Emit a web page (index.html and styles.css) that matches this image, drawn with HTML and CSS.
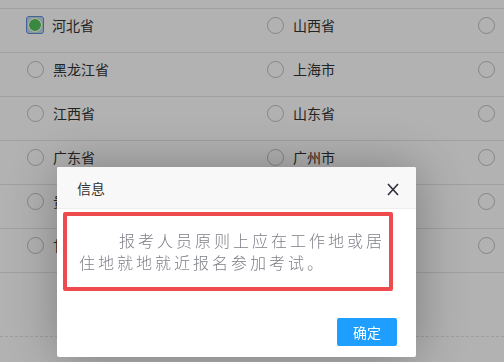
FILE: index.html
```html
<!DOCTYPE html>
<html lang="zh-CN">
  <head>
    <meta charset="UTF-8" />
    <meta name="viewport" content="width=device-width, initial-scale=1.0" />
    <title>选择报考地区</title>
    <link rel="stylesheet" href="styles.css">
  </head>
  <body>
    <div class="area-list">
      <div class="area-row">
        <label class="opt"><span class="focus-ring"><span class="radio checked"></span></span>河北省</label>
        <label class="opt"><span class="radio"></span>山西省</label>
        <label class="opt"><span class="radio"></span>内蒙古</label>
      </div>
      <div class="area-row">
        <label class="opt"><span class="radio"></span>黑龙江省</label>
        <label class="opt"><span class="radio"></span>上海市</label>
        <label class="opt"><span class="radio"></span>江苏省</label>
      </div>
      <div class="area-row">
        <label class="opt"><span class="radio"></span>江西省</label>
        <label class="opt"><span class="radio"></span>山东省</label>
        <label class="opt"><span class="radio"></span>河南省</label>
      </div>
      <div class="area-row">
        <label class="opt"><span class="radio"></span>广东省</label>
        <label class="opt"><span class="radio"></span>广州市</label>
        <label class="opt"><span class="radio"></span>深圳市</label>
      </div>
      <div class="area-row">
        <label class="opt"><span class="radio"></span>贵州省</label>
        <label class="opt"><span class="radio"></span>云南省</label>
        <label class="opt"><span class="radio"></span>西藏</label>
      </div>
      <div class="area-row">
        <label class="opt"><span class="radio"></span>甘肃省</label>
        <label class="opt"><span class="radio"></span>青海省</label>
        <label class="opt"><span class="radio"></span>宁夏</label>
      </div>
    </div>
    <div class="list-foot"></div>

    <!-- layer -->
    <div class="layer-shade"></div>
    <div class="layer">
      <div class="layer-title">
        <span>信息</span>
        <svg class="layer-close" width="12" height="13" viewBox="0 0 12 13">
          <path d="M1 1 L11 12 M11 1 L1 12" stroke="#2f2f3a" stroke-width="1.6" fill="none" />
        </svg>
      </div>
      <div class="layer-content">
        <div class="notice">
          <p>报考人员原则上应在工作地或居住地就地就近报名参加考试。</p>
        </div>
      </div>
      <div class="layer-btn">
        <a class="btn-ok">确定</a>
      </div>
    </div>
  </body>
</html>
```

FILE: styles.css
```css
/* Page */
body {
  margin: 0;
  background: #fff;
  font-family: "Noto Sans CJK SC", "Noto Sans", sans-serif;
  font-size: 14px;
  color: #333;
}

/* Area list */
.area-list {
  padding-top: 8px;
  border-bottom: 1px solid #e5e5e5;
}

.area-row {
  display: grid;
  grid-template-columns: 240px 211px 1fr;
  box-sizing: border-box;
  height: 44px;
  padding: 8px 0 0 27px;
  border-top: 1px solid #e5e5e5;
  white-space: nowrap;
  overflow: hidden;
}

.opt {
  display: flex;
  align-items: center;
  gap: 9px;
  height: 16px;
  line-height: 16px;
}

.radio {
  display: inline-block;
  box-sizing: border-box;
  width: 17px;
  height: 17px;
  border: 1px solid #c0c0c0;
  border-radius: 50%;
  background: #fff;
  flex: none;
}

.radio.checked {
  width: 16px;
  height: 16px;
  border-color: #b6dcb8;
  background: radial-gradient(circle, #52c45b 0, #52c45b 5.5px, #fff 6.2px);
}

.focus-ring {
  display: inline-flex;
  margin: -1px -1px -1px -1px;
  border: 1px solid #5d8fdc;
  border-radius: 3px;
  background: #c4d9f6;
}

.list-foot {
  margin-top: 63px;
  border-top: 1px dashed #e3e3e3;
}

/* Layer */
.layer-shade {
  position: fixed;
  inset: 0;
  background: rgba(0, 0, 0, 0.3);
}

.layer {
  position: absolute;
  left: 57px;
  top: 167px;
  width: 359px;
  background: #fff;
  border-radius: 2px;
  box-shadow: 1px 1px 50px rgba(0, 0, 0, 0.3);
}

.layer-title {
  display: flex;
  justify-content: space-between;
  align-items: center;
  height: 41px;
  padding: 0 17px 0 20px;
  background: #f8f8f8;
  border-bottom: 1px solid #eee;
  border-radius: 2px 2px 0 0;
  color: #333;
}

.layer-close {
  margin-top: 3px;
}

.layer-content {
  padding: 3px 23px 0 6px;
}

.notice {
  border: 4px solid #ee4b4f;
  border-radius: 2px;
  padding: 13px 0 14px 12px;
}

.notice p {
  margin: 0;
  width: 310px;
  font-size: 16px;
  font-weight: 300;
  line-height: 22px;
  letter-spacing: 3px;
  text-indent: 40px;
  color: #7d7f86;
}

.layer-btn {
  display: flex;
  justify-content: flex-end;
  padding: 27px 19px 11px;
}

.btn-ok {
  display: inline-block;
  height: 28px;
  line-height: 28px;
  padding: 0 16px;
  background: #1e9fff;
  color: #fff;
  border-radius: 2px;
  cursor: pointer;
}
```
